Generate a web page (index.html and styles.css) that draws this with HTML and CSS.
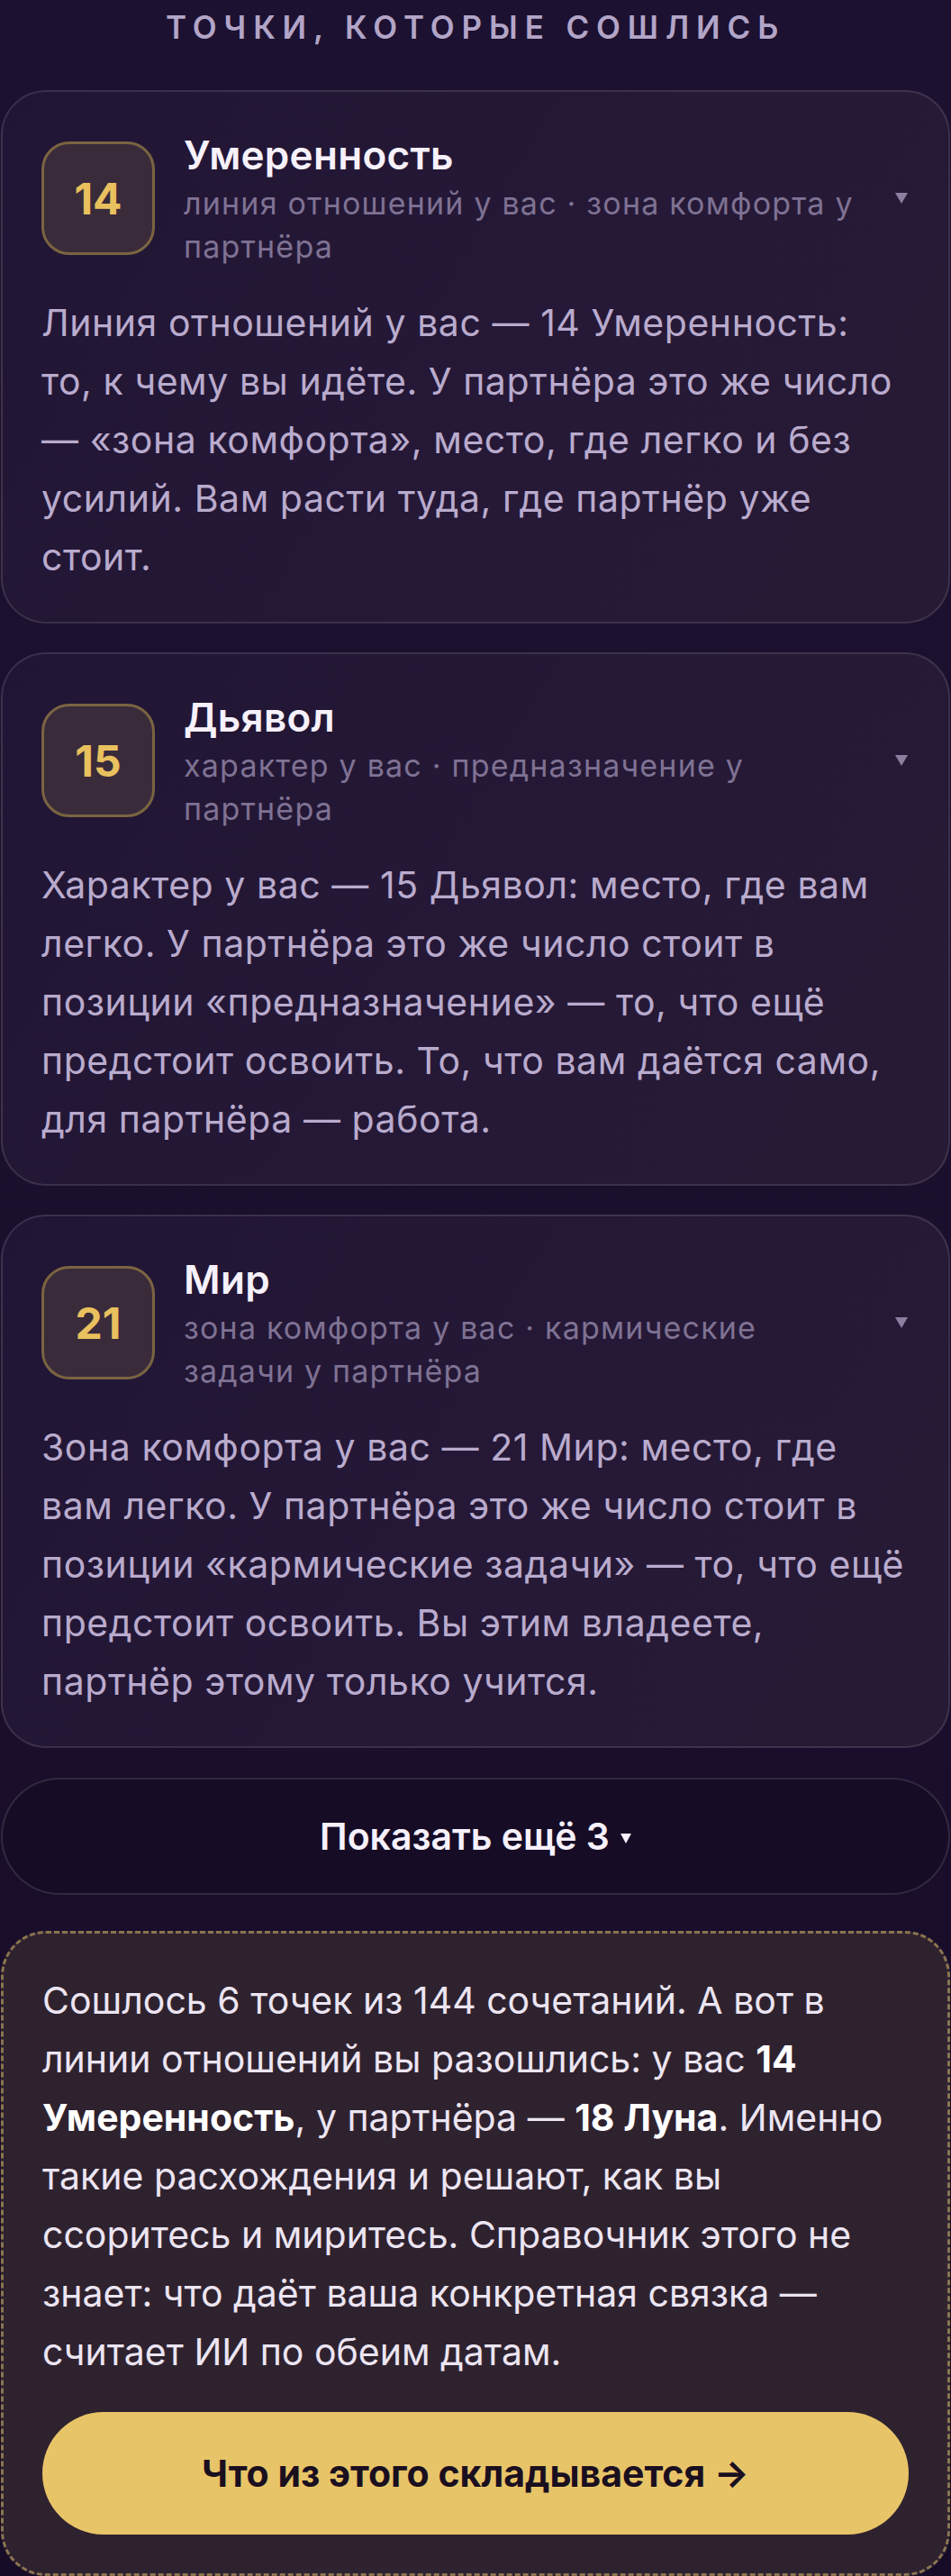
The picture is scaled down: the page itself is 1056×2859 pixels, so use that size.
FILE: index.html
```html
<!DOCTYPE html>
<html lang="ru">
<head>
<meta charset="utf-8">
<title>Точки, которые сошлись</title>
<link rel="stylesheet" href="styles.css">
</head>
<body>
<main class="page">
  <h2 class="section-title">Точки, которые сошлись</h2>

  <section class="matches">
    <article class="match">
      <header class="match-head">
        <div class="badge">14</div>
        <div class="match-info">
          <div class="match-name">Умеренность</div>
          <div class="match-pos">линия отношений у вас · зона комфорта у партнёра</div>
        </div>
        <svg class="chev" viewBox="0 0 14 12" width="14" height="12"><polygon points="0,0 14,0 7,12" /></svg>
      </header>
      <p class="match-text">Линия отношений у вас — 14 Умеренность: то, к чему вы идёте. У партнёра это же число — «зона комфорта», место, где легко и без усилий. Вам расти туда, где партнёр уже стоит.</p>
    </article>

    <article class="match">
      <header class="match-head">
        <div class="badge">15</div>
        <div class="match-info">
          <div class="match-name">Дьявол</div>
          <div class="match-pos">характер у вас · предназначение у партнёра</div>
        </div>
        <svg class="chev" viewBox="0 0 14 12" width="14" height="12"><polygon points="0,0 14,0 7,12" /></svg>
      </header>
      <p class="match-text">Характер у вас — 15 Дьявол: место, где вам легко. У партнёра это же число стоит в позиции «предназначение» — то, что ещё предстоит освоить. То, что вам даётся само, для партнёра — работа.</p>
    </article>

    <article class="match">
      <header class="match-head">
        <div class="badge">21</div>
        <div class="match-info">
          <div class="match-name">Мир</div>
          <div class="match-pos">зона комфорта у вас · кармические задачи у партнёра</div>
        </div>
        <svg class="chev" viewBox="0 0 14 12" width="14" height="12"><polygon points="0,0 14,0 7,12" /></svg>
      </header>
      <p class="match-text">Зона комфорта у вас — 21 Мир: место, где вам легко. У партнёра это же число стоит в позиции «кармические задачи» — то, что ещё предстоит освоить. Вы этим владеете, партнёр этому только учится.</p>
    </article>

    <button class="more" type="button">Показать ещё 3 <svg class="more-chev" viewBox="0 0 12 12" width="12" height="12"><polygon points="0,1 12,1 6,12" /></svg></button>

    <aside class="summary">
      <p class="summary-text">Сошлось 6 точек из 144 сочетаний. А вот в линии отношений вы разошлись: у вас <b>14 Умеренность</b>, у партнёра — <b>18 Луна</b>. Именно такие расхождения и решают, как вы ссоритесь и миритесь. Справочник этого не знает: что даёт ваша конкретная связка — считает ИИ по обеим датам.</p>
      <button class="cta" type="button">Что из этого складывается →</button>
    </aside>
  </section>
</main>
</body>
</html>
```

FILE: styles.css
```css
* {
  box-sizing: border-box;
}

html, body {
  margin: 0;
  padding: 0;
}

body {
  background: linear-gradient(180deg, #1d1131 0%, #1b0f2e 50%, #170c27 100%);
  font-family: Inter, "Noto Sans", "DejaVu Sans", sans-serif;
  color: #b9abcd;
  min-height: 2859px;
}

.page {
  width: 1054px;
  margin: 0 auto;
}

.section-title {
  margin: 0;
  height: 60px;
  line-height: 60px;
  text-align: center;
  text-transform: uppercase;
  font-size: 35px;
  font-weight: 600;
  letter-spacing: 0.225em;
  color: #b2a5c7;
}

.matches {
  margin-top: 40px;
  display: flex;
  flex-direction: column;
  gap: 32px;
}

.match {
  border: 2px solid rgba(255, 255, 255, 0.11);
  border-radius: 50px;
  background: linear-gradient(120deg, #211535 0%, #261937 60%, #271a34 100%);
  padding: 40px 43px 39px 43px;
}

.match-head {
  display: flex;
  align-items: center;
}

.badge {
  flex: 0 0 126px;
  height: 126px;
  margin-right: 32px;
  border-radius: 31px;
  border: 3px solid #7a6441;
  background: #3a2b3b;
  color: #e9c15e;
  font-size: 48px;
  font-weight: 700;
  display: flex;
  align-items: center;
  justify-content: center;
}

.match-info {
  flex: 1;
  min-width: 0;
  padding-right: 36px;
}

.match-name {
  font-size: 44px;
  font-weight: 600;
  line-height: 60px;
  letter-spacing: 0.3px;
  color: #f6f1fb;
}

.match-pos {
  font-size: 34px;
  line-height: 48px;
  letter-spacing: 1.2px;
  color: #7f7293;
}

.chev {
  flex: 0 0 auto;
  fill: #8c7fa0;
  margin-right: 2px;
}

.match-text {
  margin: 28px 0 0 0;
  font-size: 41px;
  line-height: 65px;
  letter-spacing: 0.55px;
  color: #b9abcd;
}

.more {
  height: 130px;
  margin-top: 1px;
  border: 2px solid rgba(255, 255, 255, 0.12);
  border-radius: 65px;
  background: #160c26;
  color: #f6f1fb;
  font-family: inherit;
  font-size: 41px;
  font-weight: 600;
  display: flex;
  align-items: center;
  justify-content: center;
  gap: 12px;
  cursor: pointer;
}

.more-chev {
  fill: #f6f1fb;
  margin-top: 4px;
}

.summary {
  margin-top: 8px;
  border: 3px dashed #8a7550;
  border-radius: 50px;
  background: #2f222f;
  padding: 42px 43px 43px 43px;
}

.summary-text {
  margin: 0;
  font-size: 41px;
  line-height: 65px;
  color: #ece5f2;
}

.summary-text b {
  font-weight: 700;
  color: #ffffff;
}

.cta {
  display: block;
  width: 100%;
  margin-top: 34px;
  height: 136px;
  border: 0;
  border-radius: 68px;
  background: #e8c468;
  color: #1a0f1f;
  font-family: inherit;
  font-size: 41px;
  font-weight: 700;
  cursor: pointer;
}
```
